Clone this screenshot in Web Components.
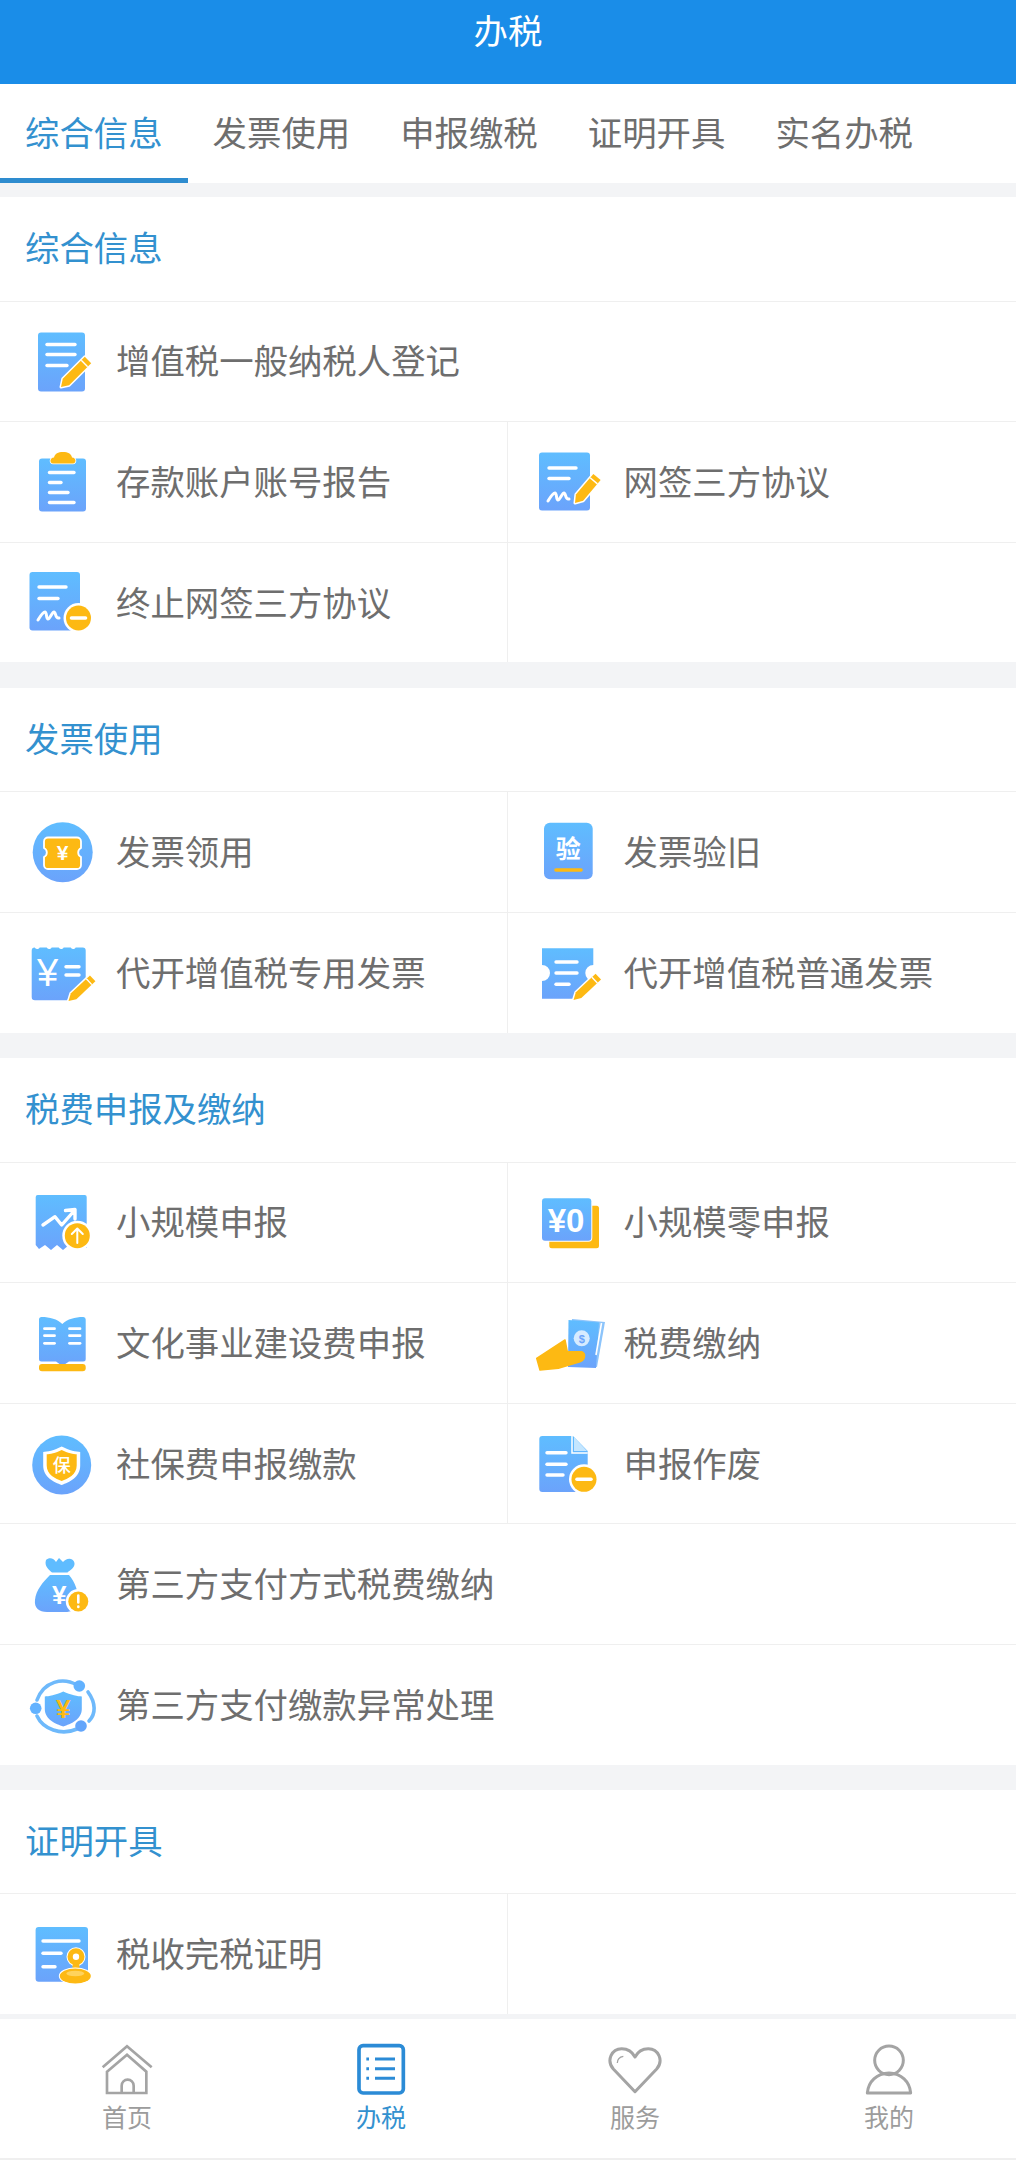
<!DOCTYPE html>
<html lang="zh">
<head>
<meta charset="utf-8">
<title>办税</title>
<style>
	html, body { margin: 0; height: 100%; background: #f3f4f6; }
	body { font-family: "Noto Sans CJK SC", "Noto Sans", sans-serif; }
</style>
</head>
<body>
<tax-app>
	<tax-header>办税</tax-header>
	<tax-tabs>
		<tax-tab active>综合信息</tax-tab>
		<tax-tab>发票使用</tax-tab>
		<tax-tab>申报缴税</tax-tab>
		<tax-tab>证明开具</tax-tab>
		<tax-tab>实名办税</tax-tab>
	</tax-tabs>

	<tax-section>
		<span slot="title">综合信息</span>
		<tax-item icon="docPen" wide>增值税一般纳税人登记</tax-item>
		<tax-item icon="clipboard" left>存款账户账号报告</tax-item>
		<tax-item icon="sign">网签三方协议</tax-item>
		<tax-item icon="signStop" left>终止网签三方协议</tax-item>
		<tax-item></tax-item>
	</tax-section>

	<tax-section>
		<span slot="title">发票使用</span>
		<tax-item icon="ticket" left>发票领用</tax-item>
		<tax-item icon="verify">发票验旧</tax-item>
		<tax-item icon="vatSpecial" left>代开增值税专用发票</tax-item>
		<tax-item icon="vatNormal">代开增值税普通发票</tax-item>
	</tax-section>

	<tax-section>
		<span slot="title">税费申报及缴纳</span>
		<tax-item icon="report" left>小规模申报</tax-item>
		<tax-item icon="zero">小规模零申报</tax-item>
		<tax-item icon="book" left>文化事业建设费申报</tax-item>
		<tax-item icon="pay">税费缴纳</tax-item>
		<tax-item icon="social" left>社保费申报缴款</tax-item>
		<tax-item icon="cancel">申报作废</tax-item>
		<tax-item icon="bag" wide>第三方支付方式税费缴纳</tax-item>
		<tax-item icon="orbit" wide>第三方支付缴款异常处理</tax-item>
	</tax-section>

	<tax-section>
		<span slot="title">证明开具</span>
		<tax-item icon="proof" left>税收完税证明</tax-item>
		<tax-item></tax-item>
	</tax-section>

	<tax-footer slot="footer">
		<tax-nav icon="home">首页</tax-nav>
		<tax-nav icon="list" active>办税</tax-nav>
		<tax-nav icon="heart">服务</tax-nav>
		<tax-nav icon="user">我的</tax-nav>
	</tax-footer>
</tax-app>

<script>
const YELLOW = '#fdb913';
const CJK = '&quot;Noto Sans CJK SC&quot;, sans-serif';
const LATIN = '&quot;Liberation Sans&quot;, sans-serif';

// a pencil lying from its tip (x1,y1) to its end (x2,y2)
function pen(x1, y1, x2, y2, w = 8) {
	const len = Math.hypot(x2 - x1, y2 - y1);
	const deg = Math.atan2(y2 - y1, x2 - x1) * 180 / Math.PI;
	const h = w / 2;
	return `<g transform="translate(${x1} ${y1}) rotate(${deg})">
		<path d="M0 0L7 ${-h}H${len}V${h}H7Z" fill="${YELLOW}" stroke="#fff" stroke-width="3" stroke-linejoin="round" paint-order="stroke"/>
		<path d="M${len - 5} ${-h}V${h}" stroke="#fff" stroke-width="1.4"/>
	</g>`;
}

function lines(list, width = 3.4) {
	return list.map(([x1, y, x2]) =>
		`<path d="M${x1} ${y}H${x2}" stroke="#fff" stroke-width="${width}" stroke-linecap="round"/>`).join('');
}

function badge(cx, cy, r, inner) {
	return `<circle cx="${cx}" cy="${cy}" r="${r + 2.5}" fill="#fff"/><circle cx="${cx}" cy="${cy}" r="${r}" fill="${YELLOW}"/>${inner}`;
}

function minus(cx, cy, r = 12.5) {
	return badge(cx, cy, r, `<path d="M${cx - 7} ${cy}H${cx + 7}" stroke="#fff" stroke-width="3.6" stroke-linecap="round"/>`);
}

function shield(cx, top, hw, h) {
	const y1 = top + h * .14, y2 = top + h * .5;
	return `M${cx} ${top}C${cx - hw * .4} ${top + h * .1} ${cx - hw * .8} ${y1} ${cx - hw} ${y1}V${y2}C${cx - hw} ${top + h * .8} ${cx - hw * .4} ${top + h * .93} ${cx} ${top + h}C${cx + hw * .4} ${top + h * .93} ${cx + hw} ${top + h * .8} ${cx + hw} ${y2}V${y1}C${cx + hw * .8} ${y1} ${cx + hw * .4} ${top + h * .1} ${cx} ${top}Z`;
}

function glyph(text, x, y, size, fill = '#fff', family = LATIN, weight = 700) {
	return `<text x="${x}" y="${y}" font-size="${size}" font-weight="${weight}" fill="${fill}" text-anchor="middle" font-family="${family}">${text}</text>`;
}

const squiggle = (x, y) => `<path d="M${x} ${y + 3}c3-5 5-8 7-8s1 7 3 7 4-7 6-7 1 7 5 6" fill="none" stroke="#fff" stroke-width="3" stroke-linecap="round" stroke-linejoin="round"/>`;

// coloured item icons, drawn on an 88 x 88 box
const ICONS = {
	docPen: `<rect x="21" y="15.5" width="47" height="59" rx="3" fill="url(#b)"/>`
		+ lines([[30, 27.5, 58], [30, 37.5, 58], [30, 48.5, 50]]) + pen(44, 70, 71, 43, 9),
	clipboard: `<rect x="22" y="20.5" width="47" height="53" rx="3" fill="url(#b)"/>`
		+ `<path d="M36 25.5c-3.500 0-3.500-6 1-6 1-4 4-5.500 9-5.500s8 1.500 9 5.500c4.500 0 4.500 6 1 6Z" fill="${YELLOW}" stroke="#fff" stroke-width="1.5" paint-order="stroke"/>`
		+ lines([[32.5, 34.5, 57], [32.5, 44.5, 44], [32.5, 54.5, 51], [32.5, 64.5, 57]]),
	sign: `<rect x="14" y="14.5" width="51" height="58" rx="3" fill="url(#b)"/>`
		+ lines([[24, 30, 51], [24, 40.5, 44]]) + squiggle(23, 60) + pen(50, 65, 72, 39, 9.5),
	signStop: `<rect x="12.5" y="13" width="50.5" height="58.5" rx="3" fill="url(#b)"/>`
		+ lines([[22, 28, 49], [22, 39.5, 41]]) + squiggle(21, 58) + minus(61.5, 59),
	ticket: `<circle cx="45.7" cy="44.3" r="30" fill="url(#b)"/>`
		+ `<path d="M31 29.5H60a4 4 0 0 1 4 4V40a5 5 0 0 0 0 9V57a4 4 0 0 1-4 4H31a4 4 0 0 1-4-4V49a5 5 0 0 0 0-9V33.5a4 4 0 0 1 4-4Z" fill="${YELLOW}" stroke="#fff" stroke-width="1.8"/>`
		+ glyph('¥', 45.5, 52, 21),
	verify: `<rect x="19" y="14.7" width="48.7" height="56.6" rx="6" fill="url(#b)"/>`
		+ glyph('验', 43.3, 50, 25, '#fff', CJK, 700)
		+ `<path d="M31 62H56" stroke="${YELLOW}" stroke-width="3.6" stroke-linecap="round"/>`,
	vatSpecial: `<path d="M14.7 21.5a3 3 0 0 1 3-3c1.500 2 3.500 2 5 0h7c1.500 2 3.500 2 5 0h7c1.500 2 3.500 2 5 0h7c1.500 2 3.500 2 5 0h7a3 3 0 0 1 3 3V52L50 71.300H18a3.300 3.300 0 0 1-3.300-3.300Z" fill="url(#b)"/>`
		+ glyph('¥', 30.5, 57, 38, '#fff', LATIN, 400)
		+ lines([[49, 37.7, 62], [49, 46, 62]]) + pen(51.5, 72, 75.7, 49.3),
	vatNormal: `<path d="M17 19.300H68.300V36a8 8 0 0 0 0 16V52L49 69.700H17V52a8 8 0 0 0 0-16Z" fill="url(#b)"/>`
		+ lines([[31, 33, 52], [31, 44, 52], [31, 55.300, 44]]) + pen(48.500, 71, 73.300, 47.700),
	report: `<path d="M18.700 19a2 2 0 0 1 2-2h47a2 2 0 0 1 2 2V70L64 68 58 72 52 67 46 72 40 67 34 72 28 67 22 71 18.700 67Z" fill="url(#b)"/>`
		+ `<path d="M26 47 38 38.700 44.700 47 57 33M48.500 32.500 58 31.500V41" fill="none" stroke="#fff" stroke-width="3.400" stroke-linecap="round" stroke-linejoin="round"/>`
		+ badge(60.3, 57.7, 12.5, `<path d="M60.300 65V51M54.800 56 60.300 50.500 65.800 56" fill="none" stroke="#fff" stroke-width="2" stroke-linecap="round" stroke-linejoin="round"/>`),
	zero: `<rect x="24.300" y="27.700" width="49.700" height="42.600" rx="2.500" fill="${YELLOW}"/>`
		+ `<rect x="17" y="20.300" width="49.300" height="42.400" rx="3" fill="url(#b)" stroke="#fff" stroke-width="2" paint-order="stroke"/>`
		+ glyph('¥0', 41, 53.500, 33),
	book: `<path d="M22 20.500a2.500 2.500 0 0 1 2.500-2.500C33 18 40 20 45.300 25 50.500 20 58 18 66 18a2.500 2.500 0 0 1 2.700 2.500V60a2.500 2.500 0 0 1-2.500 2.500H52L45.300 67 39 62.500H24.500A2.500 2.500 0 0 1 22 60Z" fill="url(#b)"/>`
		+ lines([[27.500, 29.700, 37.500], [27.500, 36.700, 37.500], [27.500, 44.300, 37.500], [52.500, 29.700, 63], [52.500, 36.700, 63], [52.500, 44.300, 63]], 2.800)
		+ `<rect x="22" y="65" width="46.700" height="7.300" rx="3" fill="${YELLOW}"/>`,
	pay: `<path d="M47 20 80 23 72 68 44 66Z" fill="#8cc4fb"/><path d="M43.500 21 74 23.500 71 69 43 68Z" fill="url(#b)"/>`
		+ `<path d="M76.500 24 71 56" stroke="#fff" stroke-width="1.600" fill="none"/>`
		+ `<circle cx="56.700" cy="39.300" r="8" fill="#d6ebff"/>`
		+ glyph('$', 56.700, 43.500, 11, '#6aa3fb')
		+ `<path d="M11.700 59.300 40 41 42.300 52.700H56.700Q60 54 59.500 57.700T55 62.700L33.300 69.300 15 71Z" fill="${YELLOW}" stroke="${YELLOW}" stroke-width="1.500" stroke-linejoin="round"/>`,
	social: `<circle cx="44.700" cy="45" r="29.500" fill="url(#b)"/>`
		+ `<path d="${shield(44.700, 26.500, 18.500, 38.500)}" fill="#fff"/><path d="${shield(44.700, 30, 15, 31)}" fill="${YELLOW}"/>`
		+ glyph('保', 44.700, 52, 18, '#fff', CJK, 500),
	cancel: `<path d="M17.300 16H48L62.700 31V72H17.300a3 3 0 0 1-3-3V19a3 3 0 0 1 3-3Z" fill="url(#b)"/>`
		+ `<path d="M49 17V31H62Z" fill="#c4e6ff"/><path d="M47 16V33H62.700" fill="none" stroke="#fff" stroke-width="1.500"/>`
		+ lines([[22, 32.700, 41], [22, 44.300, 41], [22, 55, 38]]) + minus(59, 59.300),
	bag: `<path d="M29 20C32 17 37 18 39 22L42 18 46 22C49 18 56 17 57.500 23 58 28 53 30 50.500 32.500H35C32 30 27 26 29 20Z" fill="#5fbcff"/>`
		+ `<path d="M33 35H52C58 42 62 52 61 62 60 70 54 72 48 72H30C22 72 17 68 18 60 19 50 26 42 33 35Z" fill="url(#b)"/>`
		+ glyph('¥', 42.300, 64, 26)
		+ badge(61.300, 61.500, 10, `<path d="M61.300 55.500V62.500M61.300 66.500V67" stroke="#fff" stroke-width="2.600" stroke-linecap="round"/>`),
	orbit: `<path d="M60 24C46 16 27 20 20 39M20 55C26 68 44 75 60 68M71 31C79 42 79 53 72 60" fill="none" stroke="#6eb9fb" stroke-width="3.600" stroke-linecap="round"/>`
		+ `<circle cx="62.300" cy="25" r="5.800" fill="#62b2ff"/><circle cx="18.700" cy="47.300" r="5.800" fill="#62b2ff"/><circle cx="64" cy="65" r="5.800" fill="#62a5fb"/>`
		+ `<path d="${shield(46.300, 30.500, 18.500, 35)}" fill="url(#b)"/>`
		+ glyph('¥', 46.300, 57, 26, YELLOW),
	proof: `<rect x="18.600" y="17" width="52.400" height="54.700" rx="3" fill="url(#b)"/>`
		+ lines([[26, 31, 62], [26, 43.300, 44], [26, 56.700, 38]])
		+ `<circle cx="59" cy="46.700" r="8.500" fill="${YELLOW}" stroke="#fff" stroke-width="2" paint-order="stroke"/><circle cx="59" cy="46.700" r="3.200" fill="#fff"/>`
		+ `<path d="M56 53H62L63 60H55Z" fill="${YELLOW}"/>`
		+ `<ellipse cx="58.300" cy="66" rx="15.500" ry="7.500" fill="${YELLOW}" stroke="#fff" stroke-width="2" paint-order="stroke"/>`
		+ `<ellipse cx="58.300" cy="63.500" rx="9" ry="2.800" fill="#ffd35c"/>`,
};

// bottom bar icons, each on a 162 x 162 box (3x the drawn size)
const NAV_ICONS = {
	home: `<svg viewBox="120 40 162 162"><g fill="none" stroke="currentColor" stroke-width="8">
		<path d="M128 113 201 50 275 113"/>
		<path d="M141 126 201 75 259 126V190H141Z" stroke-linejoin="miter"/>
		<path d="M185 190V168A17 17 0 0 1 221 168V190"/></g></svg>`,
	list: `<svg viewBox="882 40 162 162"><rect x="897" y="48" width="133" height="142" rx="12" fill="none" stroke="currentColor" stroke-width="11"/>
		<path d="M945 88H1005M945 117H1005M945 146H1005" stroke="currentColor" stroke-width="9"/>
		<path d="M919 88H927M919 117H927M919 146H927" stroke="currentColor" stroke-width="9"/></svg>`,
	heart: `<svg viewBox="84 40 162 162"><path d="M165 186 100 118C78 92 95 57 125 57 145 57 158 68 165 82 172 68 185 57 205 57 235 57 252 92 230 118Z" fill="none" stroke="currentColor" stroke-width="9" stroke-linejoin="round"/>
		<path d="M112 100C112 90 118 82 130 80" fill="none" stroke="currentColor" stroke-width="4"/></svg>`,
	user: `<svg viewBox="846 40 162 162"><circle cx="927" cy="92" r="43" fill="none" stroke="currentColor" stroke-width="9"/>
		<path d="M862 190C865 155 890 132 927 130 964 132 989 155 992 190Z" fill="none" stroke="currentColor" stroke-width="9" stroke-linejoin="round"/></svg>`,
};

class TaxApp extends HTMLElement {
	constructor() {
		super();
		this.attachShadow({mode:'open'});
		this.shadowRoot.innerHTML = `
			<style>
				:host { display: flex; flex-direction: column; height: 2160px; overflow: hidden; background: #f3f4f6; }
				::slotted(*) { flex: none; }
				slot[name="footer"] { display: block; margin-top: auto; }
			</style>
			<slot></slot>
			<slot name="footer"></slot>`;
	}
}

class TaxHeader extends HTMLElement {
	constructor() {
		super();
		this.attachShadow({mode:'open'});
		this.shadowRoot.innerHTML = `
			<style>
				:host { display: block; height: 84px; background: #1a8de8; color: #fff; font-size: 34.4px; line-height: 58px; text-align: center; }
			</style>
			<slot></slot>`;
	}
}

class TaxTabs extends HTMLElement {
	constructor() {
		super();
		this.attachShadow({mode:'open'});
		this.shadowRoot.innerHTML = `
			<style>
				:host { display: flex; height: 99px; background: #fff; margin-bottom: 14px; }
			</style>
			<slot></slot>`;
	}
}

class TaxTab extends HTMLElement {
	constructor() {
		super();
		this.attachShadow({mode:'open'});
		this.shadowRoot.innerHTML = `
			<style>
				:host { display: flex; align-items: center; justify-content: center; box-sizing: border-box; width: 187.6px; border-bottom: 5px solid transparent; font-size: 34.4px; color: #6e6e6e; }
				:host([active]) { color: #3391cf; border-bottom-color: #2e8ccf; }
			</style>
			<slot></slot>`;
	}
}

class TaxSection extends HTMLElement {
	constructor() {
		super();
		this.attachShadow({mode:'open'});
		this.shadowRoot.innerHTML = `
			<style>
				:host { display: block; background: #fff; }
				:host(:not(:first-of-type)) { margin-top: 25.4px; }
				#title { display: flex; align-items: center; height: 103.6px; padding: 0 0 5px 25px; box-sizing: border-box; font-size: 34.4px; color: #3391cf; }
				#grid { display: grid; grid-template-columns: 507.5px 1fr; grid-auto-rows: 120.6px; }
			</style>
			<div id="title"><slot name="title"></slot></div>
			<div id="grid"><slot></slot></div>`;
	}
}

class TaxItem extends HTMLElement {
	constructor() {
		super();
		this.attachShadow({mode:'open'});
		const name = this.getAttribute('icon');
		const icon = name ? `<svg viewBox="0 0 88 88" width="88" height="88">
			<defs><linearGradient id="b" x1="0" y1="0" x2="0" y2="1"><stop offset="0" stop-color="#5fbdff"/><stop offset="1" stop-color="#6ba3fb"/></linearGradient></defs>
			${ICONS[name]}</svg>` : '';
		this.shadowRoot.innerHTML = `
			<style>
				:host { display: flex; align-items: center; gap: 11px; box-sizing: border-box; min-width: 0; padding-left: 17px; border-top: 1.4px solid #efefef; font-size: 34.4px; color: #6e6e6e; white-space: nowrap; }
				:host([wide]) { grid-column: 1 / -1; }
				:host([left]) { border-right: 1.4px solid #efefef; }
				svg { flex: none; display: block; }
				#label { padding-bottom: 4px; }
			</style>
			${icon}<span id="label"><slot></slot></span>`;
	}
}

class TaxFooter extends HTMLElement {
	constructor() {
		super();
		this.attachShadow({mode:'open'});
		this.shadowRoot.innerHTML = `
			<style>
				:host { display: grid; grid-template-columns: repeat(4, 1fr); box-sizing: border-box; height: 141px; background: #fff; border-bottom: 2px solid #efefef; }
			</style>
			<slot></slot>`;
	}
}

class TaxNav extends HTMLElement {
	constructor() {
		super();
		this.attachShadow({mode:'open'});
		this.shadowRoot.innerHTML = `
			<style>
				:host { display: flex; flex-direction: column; align-items: center; padding-top: 24px; font-size: 25px; line-height: 38px; color: #9c9c9c; }
				:host([active]) { color: #3391cf; }
				#icon { color: #a4a4a4; width: 54px; height: 54px; }
				:host([active]) #icon { color: #2b8bd6; }
				svg { display: block; width: 54px; height: 54px; }
			</style>
			<div id="icon">${NAV_ICONS[this.getAttribute('icon')]}</div>
			<slot></slot>`;
	}
}

customElements.define('tax-app', TaxApp);
customElements.define('tax-header', TaxHeader);
customElements.define('tax-tabs', TaxTabs);
customElements.define('tax-tab', TaxTab);
customElements.define('tax-section', TaxSection);
customElements.define('tax-item', TaxItem);
customElements.define('tax-footer', TaxFooter);
customElements.define('tax-nav', TaxNav);
</script>
</body>
</html>
